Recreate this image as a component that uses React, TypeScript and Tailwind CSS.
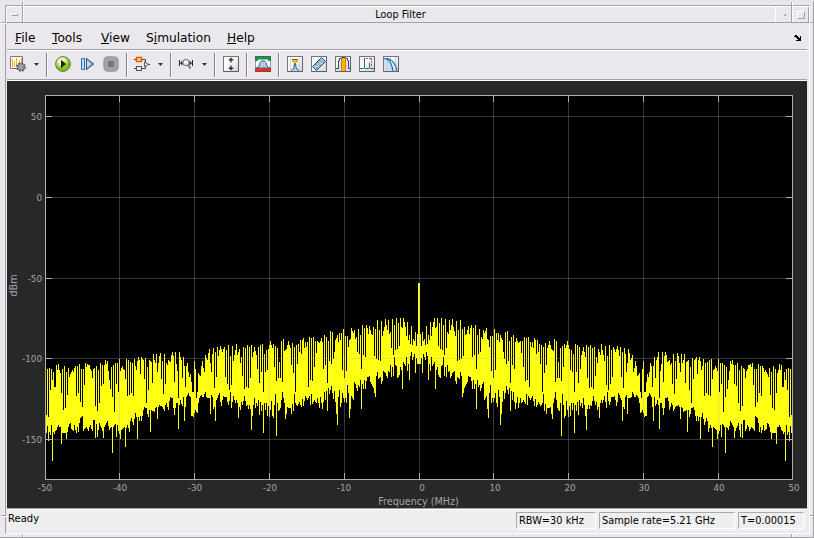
import type { ReactNode } from "react";

// Trace samples: pairs of x, y in thirds of a pixel from each segment's origin.
type Segment = { x: number; y: number; end: number; top: number[]; gap: number[]; low: number[] };

const OUTER: Segment = {
  x: 40,
  y: 310,
  end: 230,
  top: [
    18,315, 21,178, 24,176, 27,174, 33,178, 36,210, 40,185, 45,230, 49,165, 52,180, 55,162, 60,190, 66,178, 72,168, 78,186, 84,174, 88,200, 93,185, 96,180, 99,186, 105,168,
    111,168, 117,162, 123,178, 129,178, 135,160, 138,170, 141,162, 147,165, 153,182, 156,204, 160,178, 168,168, 174,180, 180,160, 186,165, 192,165,
    196,150, 199,162, 202,153, 208,210, 213,170, 219,165, 226,158, 231,160, 237,147, 240,182, 246,168, 252,180, 258,147, 264,150, 270,157, 276,160, 282,147,
    288,180, 294,141, 297,150, 303,141, 309,150, 315,144, 321,172, 327,150, 333,155, 339,132, 345,160, 348,132, 354,158, 360,129, 366,153, 372,132, 381,165, 384,150,
    390,156, 396,126, 399,138, 405,126, 411,182, 417,126, 423,150, 429,141, 435,180, 441,160, 447,200, 450,192, 454,215, 459,245, 462,153, 466,178, 471,245, 474,190,
    480,198, 486,153, 492,185, 496,135, 501,150, 507,117, 510,158, 513,158, 520,115, 525,126, 531,112, 534,138, 541,108, 547,126, 552,112, 558,120, 564,105, 570,110, 577,108,
    582,126, 588,102, 592,118, 600,120,
  ],
  gap: [
    18,315, 24,320, 30,240, 44,230, 63,248, 69,300, 75,293, 81,255, 108,258, 114,248, 120,275, 126,290, 132,225, 165,288, 171,302, 177,278, 184,228, 189,222,
    210,237, 216,260, 222,305, 228,222, 234,245, 255,207, 261,258, 267,254, 273,249, 279,258, 300,192, 312,208, 318,280, 324,240, 336,218, 351,186,
    363,208, 369,251, 375,222, 402,216, 414,265, 426,204, 435,232, 457,245, 468,265, 514,187, 522,234, 528,200, 555,200, 561,221, 567,240, 573,221, 594,174,
  ],
  low: [
    18,368, 21,348, 24,392, 27,365, 30,375, 33,345, 36,452, 39,365, 42,372, 48,360, 54,345, 60,352, 64,402, 67,368, 72,370, 75,368, 78,386, 81,366, 84,350, 90,340, 93,356, 99,362,
    102,345, 108,368, 111,350, 114,365, 120,325, 126,318, 130,362, 138,350, 144,362, 150,345, 156,362, 160,330, 163,330, 166,384, 169,342, 172,380, 178,340, 184,355, 187,362,
    190,384, 193,350, 196,345, 202,333, 208,360, 213,350, 216,428, 219,352, 225,342, 228,380, 231,345, 237,372, 241,386, 244,360, 252,350, 256,412, 259,355, 262,345, 268,365, 271,332,
    274,325, 280,345, 286,310, 289,320, 292,386, 295,320, 298,333, 301,318, 304,333, 312,290, 318,295, 324,320, 327,300, 331,365, 334,300, 342,305, 348,290, 351,326, 354,290,
    357,285, 366,290, 372,302, 378,278, 384,299, 390,262, 396,265, 403,314, 408,280, 412,280, 415,358, 418,285, 421,270, 426,288, 430,262, 433,332, 437,290, 440,260, 444,250, 450,260,
    454,318, 460,320, 465,300, 471,308, 477,265, 483,255, 489,262, 495,245, 500,262, 506,265, 508,264, 511,311, 514,255, 517,262, 520,297, 523,290, 526,332, 529,270, 537,250,
    543,288, 550,258, 558,262, 564,285, 570,265, 576,240, 582,270, 588,260, 592,280, 595,322, 600,270,
  ],
};

const INNER: Segment = {
  x: 230,
  y: 270,
  end: 419,
  top: [
    1,258, 7,228, 10,272, 13,255, 19,222, 22,255, 28,237, 31,280, 34,262, 40,231, 46,234, 52,225, 58,231, 64,225, 67,262, 73,231, 79,255, 85,231, 91,225, 97,222,
    103,252, 109,240, 115,237, 121,213, 127,234, 130,222, 136,228, 142,234, 148,276, 154,213, 160,207, 163,243, 169,237, 175,213, 181,234, 187,219, 193,231, 199,225,
    205,222, 211,210, 217,210, 220,204, 223,234, 226,216, 229,232, 232,216, 238,201, 244,204, 250,201, 256,213, 262,213, 268,219, 274,204, 277,216, 283,195, 289,201,
    295,213, 301,183, 307,186, 313,245, 316,210, 319,204, 322,195, 328,189, 331,210, 334,189, 340,177, 346,198, 352,198, 358,210, 361,207, 364,174, 370,189, 373,180,
    379,201, 385,177, 391,195, 397,165, 403,174, 409,165, 415,192, 418,168, 424,192, 430,171, 436,177, 442,150, 448,180, 454,153, 457,198, 463,170, 466,147, 472,180,
    475,150, 481,186, 487,147, 493,165, 499,144, 505,159, 511,144, 514,171, 517,174, 520,144, 526,170, 529,198, 532,156, 535,210, 538,195, 541,222, 544,168, 547,225,
    550,207, 553,213, 556,186, 559,228, 562,192, 564,39, 568,39,
  ],
  gap: [
    4,345, 25,246, 37,318, 43,356, 49,350, 55,354, 61,324, 82,297, 88,338, 94,306, 100,366, 106,306, 112,300, 133,291, 139,333, 145,324, 151,324, 157,336,
    184,285, 190,308, 196,366, 202,282, 208,246, 214,252, 235,350, 241,330, 247,333, 253,291, 259,249, 280,297, 286,285, 292,339, 298,273, 304,282, 310,267, 325,216,
    337,300, 343,324, 349,303, 355,231, 376,207, 382,246, 388,252, 394,297, 400,255, 406,260, 412,174, 427,195, 433,258, 439,266, 445,270, 451,272, 478,192, 484,234,
    490,254, 496,240, 502,237, 508,228,
  ],
  low: [
    1,366, 4,414, 7,396, 10,378, 16,399, 19,390, 22,400, 25,444, 28,411, 31,420, 34,396, 37,405, 43,378, 49,408, 52,406, 55,417, 58,404, 61,417, 64,480, 67,438, 70,405, 73,384, 76,414, 79,399, 82,408,
    85,390, 88,435, 91,395, 94,424, 97,405, 100,489, 103,400, 106,420, 109,399, 112,438, 115,408, 118,441, 121,420, 124,393, 127,438, 130,444, 133,405, 136,372, 139,498, 142,400, 145,423,
    151,414, 157,366, 163,399, 166,447, 169,432, 172,411, 178,414, 181,414, 184,432, 187,402, 190,423, 193,372, 196,399, 202,408, 208,396, 214,411, 217,387, 220,408, 226,378,
    232,390, 238,378, 241,405, 244,372, 247,402, 253,390, 259,399, 262,384, 268,414, 271,381, 277,417, 280,395, 283,366, 286,390, 289,362, 292,423, 295,354, 298,372, 304,348,
    310,387, 313,363, 316,396, 319,432, 322,465, 325,381, 328,360, 331,411, 334,398, 337,370, 343,396, 346,384, 349,399, 352,345, 355,369, 358,444, 361,417, 364,378, 370,390,
    373,336, 376,342, 382,363, 385,345, 388,351, 391,330, 394,417, 397,342, 400,357, 403,330, 406,357, 409,333, 412,321, 418,318, 421,336, 424,342, 430,354, 436,381, 439,318,
    442,306, 445,327, 451,321, 454,342, 457,333, 460,303, 466,309, 472,324, 475,303, 478,306, 481,286, 484,321, 487,290, 490,318, 493,262, 496,285, 499,288, 502,324, 508,315,
    511,291, 514,300, 517,357, 520,276, 526,288, 529,260, 532,303, 535,282, 538,330, 541,258, 544,246, 547,270, 550,262, 553,252, 556,309, 559,264, 562,282, 568,282,
  ],
};

function sample(points: number[], at: number) {
  for (let i = 0; i < points.length; i += 2) {
    if (Math.abs(points[i] - at) <= 1) return points[i + 1];
  }
  for (let i = 2; i < points.length; i += 2) {
    if (at <= points[i]) {
      const t = (at - points[i - 2]) / (points[i] - points[i - 2]);
      return points[i - 1] + t * (points[i + 1] - points[i - 1]);
    }
  }
  return points[points.length - 1];
}

// The spectrum is symmetric around 0 MHz, so each column is drawn twice.
function tracePath() {
  let d = "";
  for (const seg of [OUTER, INNER]) {
    for (let x = seg === OUTER ? 46 : seg.x; x < seg.end; x++) {
      const at = (x - seg.x) * 3 + 1;
      let top = sample(seg.top, at);
      for (let i = 0; i < seg.gap.length; i += 2) {
        if (Math.abs(seg.gap[i] - at) <= 1) top = seg.gap[i + 1];
      }
      const y1 = seg.y + Math.round(top / 3);
      const y2 = seg.y + Math.round(sample(seg.low, at) / 3);
      d += `M${x} ${y1}h1V${y2}h-1zM${837 - x} ${y1}h1V${y2}h-1z`;
    }
  }
  return d;
}

const TRACE = tracePath();
const XS = [119, 194, 269, 344, 419, 493, 568, 643, 718];
const YS = [116, 197, 278, 358, 439];
const X_LABELS: [number, string][] = [
  [45, "-50"], [120, "-40"], [195, "-30"], [270, "-20"], [344, "-10"], [422, "0"],
  [495, "10"], [570, "20"], [644, "30"], [719, "40"], [794, "50"],
];
const Y_LABELS = ["50", "0", "-50", "-100", "-150"];

function Plot() {
  return (
    <svg width="800" height="427" viewBox="7 81 800 427" className="block bg-[#282828]">
      <g shapeRendering="crispEdges">
        <rect x="45" y="95" width="748" height="385" fill="#000" />
        <path d={TRACE} fill="#ffff11" />
        {XS.map((x) => <rect key={x} x={x} y="96" width="1" height="383" fill="#afafaf" fillOpacity=".3" />)}
        {YS.map((y) => <rect key={y} x="46" y={y} width="746" height="1" fill="#afafaf" fillOpacity=".3" />)}
        {XS.map((x) => <path key={x} d={`M${x} 96h1v6h-1zM${x} 473h1v6h-1z`} fill="#afafaf" />)}
        {YS.map((y) => <path key={y} d={`M46 ${y}h6v1h-6zM786 ${y}h6v1h-6z`} fill="#afafaf" />)}
        <path d="M45.5 95.5H792.5V479.5H45.5Z" fill="none" stroke="#afafaf" />
      </g>
      <g fill="#a5a5a5" fontFamily="'DejaVu Sans', sans-serif" fontSize="8.8">
        {X_LABELS.map(([x, t]) => <text key={t} x={x} y="491" textAnchor="middle">{t}</text>)}
        {Y_LABELS.map((t, i) => <text key={t} x="42" y={YS[i] + 4} textAnchor="end">{t}</text>)}
        <text x="418.5" y="505" textAnchor="middle" fontSize="9.6">Frequency (MHz)</text>
        <text transform="translate(17 285.5) rotate(-90)" textAnchor="middle" fontSize="9.6">dBm</text>
      </g>
    </svg>
  );
}

function Icon({ children, className = "" }: { children: ReactNode; className?: string }) {
  return <svg width="16" height="16" viewBox="0 0 16 16" className={`block shrink-0 ${className}`}>{children}</svg>;
}

function Tile({ children, className }: { children: ReactNode; className?: string }) {
  return (
    <Icon className={className}>
      <rect x=".5" y=".5" width="15" height="15" fill="url(#tile)" stroke="#77777b" />
      {children}
      <path d="M15.5 1V15.5H1" fill="none" stroke="#626266" />
    </Icon>
  );
}

const Caret = () => (
  <svg width="5" height="3" viewBox="0 0 5 3" className="mt-px ml-2 block shrink-0"><path d="M0 0h5L2.5 3z" fill="#333" /></svg>
);

const Sep = ({ className }: { className: string }) => (
  <div className={`mt-0.5 h-6 w-0.5 shrink-0 border-l border-[#858587] bg-[#f8f7f9] ${className}`} />
);

function Toolbar() {
  return (
    <div className="flex h-7 items-center pb-0.5 pl-[3px]">
      <svg width="0" height="0" className="absolute">
        <defs>
          <linearGradient id="tile" x2="1" y2="1"><stop offset=".35" stopColor="#fff" /><stop offset="1" stopColor="#ccd1d8" /></linearGradient>
          <radialGradient id="run" cx=".4" cy=".3"><stop stopColor="#fff" /><stop offset=".5" stopColor="#dff09b" /><stop offset="1" stopColor="#85b92c" /></radialGradient>
          <linearGradient id="step" x2="1"><stop stopColor="#e5f5ff" /><stop offset="1" stopColor="#75b5de" /></linearGradient>
        </defs>
      </svg>
      <Icon>
        <path d="M.5.5h12v12H.5z" fill="#fff" stroke="#777" />
        <path d="M2.5 3v8M4.5 5v6M6.5 2v9M9.5 4v6M11.5 2v6" stroke="#f5a516" />
        <circle cx="11" cy="11" r="4" fill="#c4c4c4" stroke="#55585c" strokeWidth="1.5" strokeDasharray="2 1.1" />
        <circle cx="11" cy="11" r="3.2" fill="#bbb" stroke="#66696c" />
        <circle cx="11" cy="11" r="1.4" fill="#eee" stroke="#55585c" strokeWidth=".8" />
      </Icon>
      <Caret />
      <Sep className="ml-[7px]" />
      <Icon className="ml-[7px]">
        <circle cx="8" cy="8" r="7.4" fill="url(#run)" stroke="#5f7f25" />
        <path d="M6 3.8L11.2 8 6 12.2z" fill="#202c18" />
      </Icon>
      <Icon className="ml-[9px]">
        <path d="M1.5 2.5h3v11h-3z" fill="#b9dcf0" stroke="#426f9e" />
        <path d="M6.5 2.8L13.3 8l-6.8 5.2z" fill="url(#step)" stroke="#34638f" strokeWidth="1.2" />
      </Icon>
      <Icon className="ml-[7px]">
        <rect x=".3" y=".3" width="15.4" height="15.4" rx="4.5" fill="#9b9b9b" />
        <rect x="1.5" y="1.5" width="13" height="13" rx="4" fill="#a4a4a4" />
        <rect x="5" y="5" width="6" height="6" fill="#777" />
      </Icon>
      <Sep className="ml-[7px]" />
      <Icon className="ml-[6px]">
        <rect x="1" y="0" width="8" height="7" rx="1" fill="#ffc56e" fillOpacity=".6" />
        <path d="M0 3.5h3M8 3.5h3.5V6M0 12.5h3M8 12.5h3.5V10M14 8.5h2" fill="none" stroke="#444" />
        <rect x="2.5" y="1.5" width="5" height="4" fill="#ffc878" stroke="#d35e0d" strokeWidth="1.2" />
        <rect x="2.5" y="10.5" width="5" height="4" fill="#eee" stroke="#555" />
        <path d="M10.5 6L14.5 8.3l-4 2.3z" fill="#fff" stroke="#555" />
      </Icon>
      <Caret />
      <Sep className="ml-[7px]" />
      <Icon className="ml-[6px]">
        <path d="M1.5 4v6M14.5 4v6" stroke="#222" />
        <path d="M4.5 4.5v5L2 7zM11.5 4.5v5L14 7z" fill="#222" />
        <circle cx="8" cy="6.5" r="3.1" fill="#e5f5fa" stroke="#666a70" />
        <path d="M10 9l2.5 3.5" stroke="#777" strokeWidth="2" />
      </Icon>
      <Caret />
      <Sep className="ml-[7px]" />
      <Tile className="ml-[7px]">
        <path d="M8 1.5l3 3H5zM8 14.5l3-3H5z" fill="#333" />
        <path d="M8 4v2.5M8 9.5v2.5" stroke="#333" strokeWidth="1.4" />
      </Tile>
      <Sep className="ml-[7px]" />
      <Icon className="ml-[7px]">
        <path fill="#fff" d="M0 0h16v16H0z" />
        <path d="M0 0h16v5h-3V3.5H3V5H0z" fill="#179447" />
        <path d="M1 12c4 0 3-7 6-7h2c3 0 2 7 6 7z" fill="#b7d6ed" stroke="#255c80" />
        <path d="M5.5 6v6M8 5v7M10.5 6v6" stroke="#82aeca" strokeWidth=".7" />
        <path d="M0 12h16v4H0z" fill="#df3020" />
        <path d="M.5.5h15v15H.5z" fill="none" stroke="#555" strokeOpacity=".6" />
      </Icon>
      <Sep className="ml-[7px]" />
      <Tile className="ml-[7px]">
        <path d="M3.5 2v12M12.5 2v12" stroke="#d0d3d6" />
        <path d="M4 14.5c3-1 3-3 3.5-7h1c.5 4 .5 6 3.5 7" fill="#a9cce2" stroke="#315d7a" />
        <path d="M5 3h6v2L9 7H7L5 5z" fill="#ffc31c" />
        <path d="M5 3.5h6M6 5.5h1M9 5.5h1" stroke="#815c14" />
      </Tile>
      <Tile className="ml-2">
        <path d="M1.5 10.5l9-9 4 4-9 9z" fill="#a8cde8" stroke="#264d6c" />
        <path d="M4.5 8l1.3 1.3M6.5 6l1.3 1.3M8.5 4l1.3 1.3M5.5 12h1M8.5 9h1M11.5 6h1" stroke="#264d6c" />
      </Tile>
      <Tile className="ml-2">
        <path d="M1 13V12h3V5h8v7h3v3H1z" fill="#cfe0ee" />
        <path d="M6 1h5v14H6z" fill="#ffb300" />
        <path d="M6.5 1v14M10.5 1v14" stroke="#d57b00" />
        <path d="M1 12.5h2.5V4.5h1v-2H6M15 12.5h-1.5V4.5h-1v-2H11M6 2.5L7 1.5h3l1 1" fill="none" stroke="#204d70" />
      </Tile>
      <Tile className="ml-2">
        <path d="M1 12l1 1 1-1 1 1 1.500-1.500V2v9.500L7 13l1-1 1 1 1.500-1.500V7v4.500L12 13l1-1 1 1 1-1" fill="none" stroke="#17669b" />
        <path d="M7 2.500h6M12.500 2v9" stroke="#d84934" strokeDasharray="2 1" />
      </Tile>
      <Tile className="ml-2">
        <path d="M1 2.500c5 0 8 6 9 12.500H1z" fill="#cfe0f2" />
        <path d="M4.500 1v14M7.500 1v14M12.500 1v14" stroke="#c3cbd2" />
        <path d="M1 2.500c5 0 8 6 9 12.500M3 2.500c6 0 10 6 11 12.500" fill="none" stroke="#1476b5" strokeWidth="1.200" />
      </Tile>
    </div>
  );
}

const U = ({ children }: { children: ReactNode }) => (
  <span className="underline decoration-1 underline-offset-1">{children}</span>
);

function MenuBar() {
  return (
    <div className="flex h-[26px] items-center pt-1 pl-2 text-[12.2px] leading-[13px]">
      <span className="w-[37px]"><U>F</U>ile</span>
      <span className="w-[49px]"><U>T</U>ools</span>
      <span className="w-[45px]"><U>V</U>iew</span>
      <span className="w-[81px]">S<U>i</U>mulation</span>
      <span><U>H</U>elp</span>
      <svg width="7" height="6" viewBox="0 0 7 6" className="mr-[6px] ml-auto block" shapeRendering="crispEdges">
        <path d="M0 1h1V0h2v1h1v1h1v1h1V1h1v5H2V5h2V4H3V3H2V2H0z" />
      </svg>
    </div>
  );
}

const Field = ({ className, children }: { className: string; children: ReactNode }) => (
  <div className={`h-[17px] border border-t-[#aaa] border-r-white border-b-white border-l-[#aaa] pl-[2px] text-[9.8px] leading-[15px] ${className}`}>{children}</div>
);

export default function App() {
  return (
    <div className="relative h-[538px] w-[814px] overflow-hidden border-t-2 border-r border-b border-[#a3a1a6] border-t-[#e5e5e5] bg-[#ebe8ed] pt-[3px] pl-[5px] font-['DejaVu_Sans',sans-serif] text-[10px] whitespace-nowrap text-black">
      <div className="h-[529px] w-[805px] border border-[#a3a1a6] border-r-white border-b-white">
        <div className="flex h-[17px] border-t border-l border-white border-b border-b-[#a3a1a6]">
          <div className="flex w-4 items-center justify-center border-r border-[#a3a1a6]">
            <div className="h-[3px] w-[7px] border border-white border-r-[#a3a1a6] border-b-[#a3a1a6]" />
          </div>
          <div className="flex-1 pl-[3px] text-center text-[9.7px] leading-[15px]">Loop Filter</div>
          <div className="flex w-[17px] items-center justify-center border-l border-white">
            <div className="size-[3px] border border-white border-r-[#a3a1a6] border-b-[#a3a1a6]" />
          </div>
          <div className="flex w-[17px] items-center justify-center border-x border-l-white border-r-[#a3a1a6]">
            <div className="size-2 border border-white border-r-[#a3a1a6] border-b-[#a3a1a6]" />
          </div>
        </div>
        <div className="ml-px w-[800px]">
          <MenuBar />
          <div className="h-0.5 border-t border-[#a3a1a6] bg-white" />
          <Toolbar />
          <div className="h-0.5 border-t border-[#a3a1a6] bg-white" />
          <Plot />
          <div className="h-0.5 border-t border-[#a3a1a6] bg-white" />
          <div className="flex h-[21px] bg-[#efefef] pt-[2px]">
            <div className="w-[509px] pl-px leading-[14px]">Ready</div>
            <Field className="w-20">RBW=30 kHz</Field>
            <Field className="ml-[3px] w-[136px]">Sample rate=5.21 GHz</Field>
            <Field className="ml-[3px] w-[66px]">T=0.00015</Field>
          </div>
        </div>
      </div>
      {/* resize corner notches over the frame */}
      <div className="absolute top-0 left-[22px] h-5 w-0.5 border-l border-[#a3a1a6] bg-white" />
      <div className="absolute top-0 left-[791px] h-5 w-0.5 border-l border-[#a3a1a6] bg-white" />
      <div className="absolute top-5 left-px h-0.5 w-[5px] border-t border-[#a3a1a6] bg-white" />
      <div className="absolute top-5 left-[810px] h-0.5 w-[4px] border-t border-[#a3a1a6] bg-white" />
      <div className="absolute top-[513px] left-px h-0.5 w-[5px] border-t border-[#a3a1a6] bg-white" />
      <div className="absolute top-[513px] left-[810px] h-0.5 w-[4px] border-t border-[#a3a1a6] bg-white" />
      <div className="absolute top-[532px] left-[22px] h-1 w-0.5 border-l border-[#a3a1a6] bg-white" />
      <div className="absolute top-[532px] left-[791px] h-1 w-0.5 border-l border-[#a3a1a6] bg-white" />
    </div>
  );
}
